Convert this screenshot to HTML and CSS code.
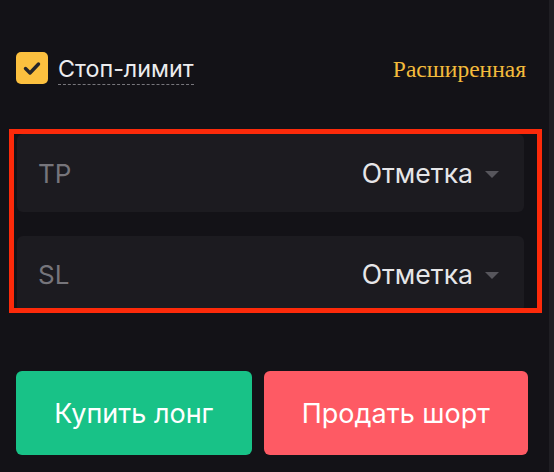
FILE: index.html
```html
<!DOCTYPE html>
<html lang="ru">
<head>
<meta charset="utf-8">
<link rel="stylesheet" href="styles.css">
</head>
<body>
<div class="page">
  <main class="panel">
    <div class="opts">
      <label class="check">
        <span class="box">
          <svg viewBox="0 0 32 32" width="32" height="32"><path d="M9.5 16.5 L14 21 L22.5 12" fill="none" stroke="#26252a" stroke-width="3.4" stroke-linecap="round" stroke-linejoin="round"/></svg>
        </span>
        <span class="check-label">Стоп-лимит</span>
      </label>
      <span class="advanced">Расширенная</span>
    </div>
    <div class="fields">
      <div class="field">
        <span class="field-name">TP</span>
        <span class="select">Отметка <span class="caret"></span></span>
      </div>
      <div class="field">
        <span class="field-name">SL</span>
        <span class="select">Отметка <span class="caret"></span></span>
      </div>
      <div class="highlight"></div>
    </div>
    <div class="actions">
      <button class="btn buy">Купить лонг</button>
      <button class="btn sell">Продать шорт</button>
    </div>
  </main>
  <div class="rail"></div>
</div>
</body>
</html>
```
FILE: styles.css
```css
html, body {
  margin: 0;
  padding: 0;
  background: #131217;
  height: 100%;
  overflow: hidden;
}
.page {
  display: flex;
  height: 472px;
  font-family: Inter, "Noto Sans", sans-serif;
}
.panel {
  flex: 1;
  display: flex;
  flex-direction: column;
}
.rail {
  width: 5px;
  background: #1f1e23;
}
.opts {
  display: flex;
  align-items: center;
  justify-content: space-between;
  margin: 52px 23px 0 16px;
  height: 32px;
}
.check {
  display: flex;
  align-items: center;
  gap: 10px;
}
.box {
  width: 32px;
  height: 32px;
  border-radius: 5px;
  background: #fcc03f;
  display: block;
}
.box svg { display: block; }
.check-label {
  color: #ececee;
  font-size: 23.3px;
  line-height: 30px;
  border-bottom: 1.5px dashed #77767c;
  padding-bottom: 0;
  position: relative;
  top: 1px;
}
.advanced {
  font-family: "Liberation Serif", serif;
  font-size: 23.5px;
  color: #f3bb3c;
  position: relative;
  top: 1px;
}
.fields {
  position: relative;
  margin: 50px 25px 0 17px;
  display: flex;
  flex-direction: column;
  gap: 24px;
}
.field {
  height: 78px;
  background: #1c1b20;
  border-radius: 6px;
  display: flex;
  align-items: center;
  justify-content: space-between;
  padding: 0 25px 0 21px;
}
.field + .field { height: 76px; }
.field-name {
  color: #76757b;
  font-size: 26px;
}
.select {
  color: #e6e6e8;
  font-size: 26.6px;
  display: flex;
  align-items: center;
  gap: 12px;
}
.caret {
  width: 0;
  height: 0;
  border-left: 7px solid transparent;
  border-right: 7px solid transparent;
  border-top: 7px solid #57565c;
  margin-top: 2px;
}
.highlight {
  position: absolute;
  left: -8px;
  top: -5px;
  right: -18px;
  bottom: -1px;
  border: 5px solid #fc2a0a;
  pointer-events: none;
}
.actions {
  display: flex;
  gap: 12px;
  margin: 59px 21px 0 16px;
}
.btn {
  flex: 1 1 auto;
  height: 84px;
  border: none;
  border-radius: 6px;
  color: #fff;
  font-family: Inter, "Noto Sans", sans-serif;
  font-size: 27px;
  padding: 0 36px;
}
.buy { background: #18c287; }
.sell { background: #fe5a64; }
```
